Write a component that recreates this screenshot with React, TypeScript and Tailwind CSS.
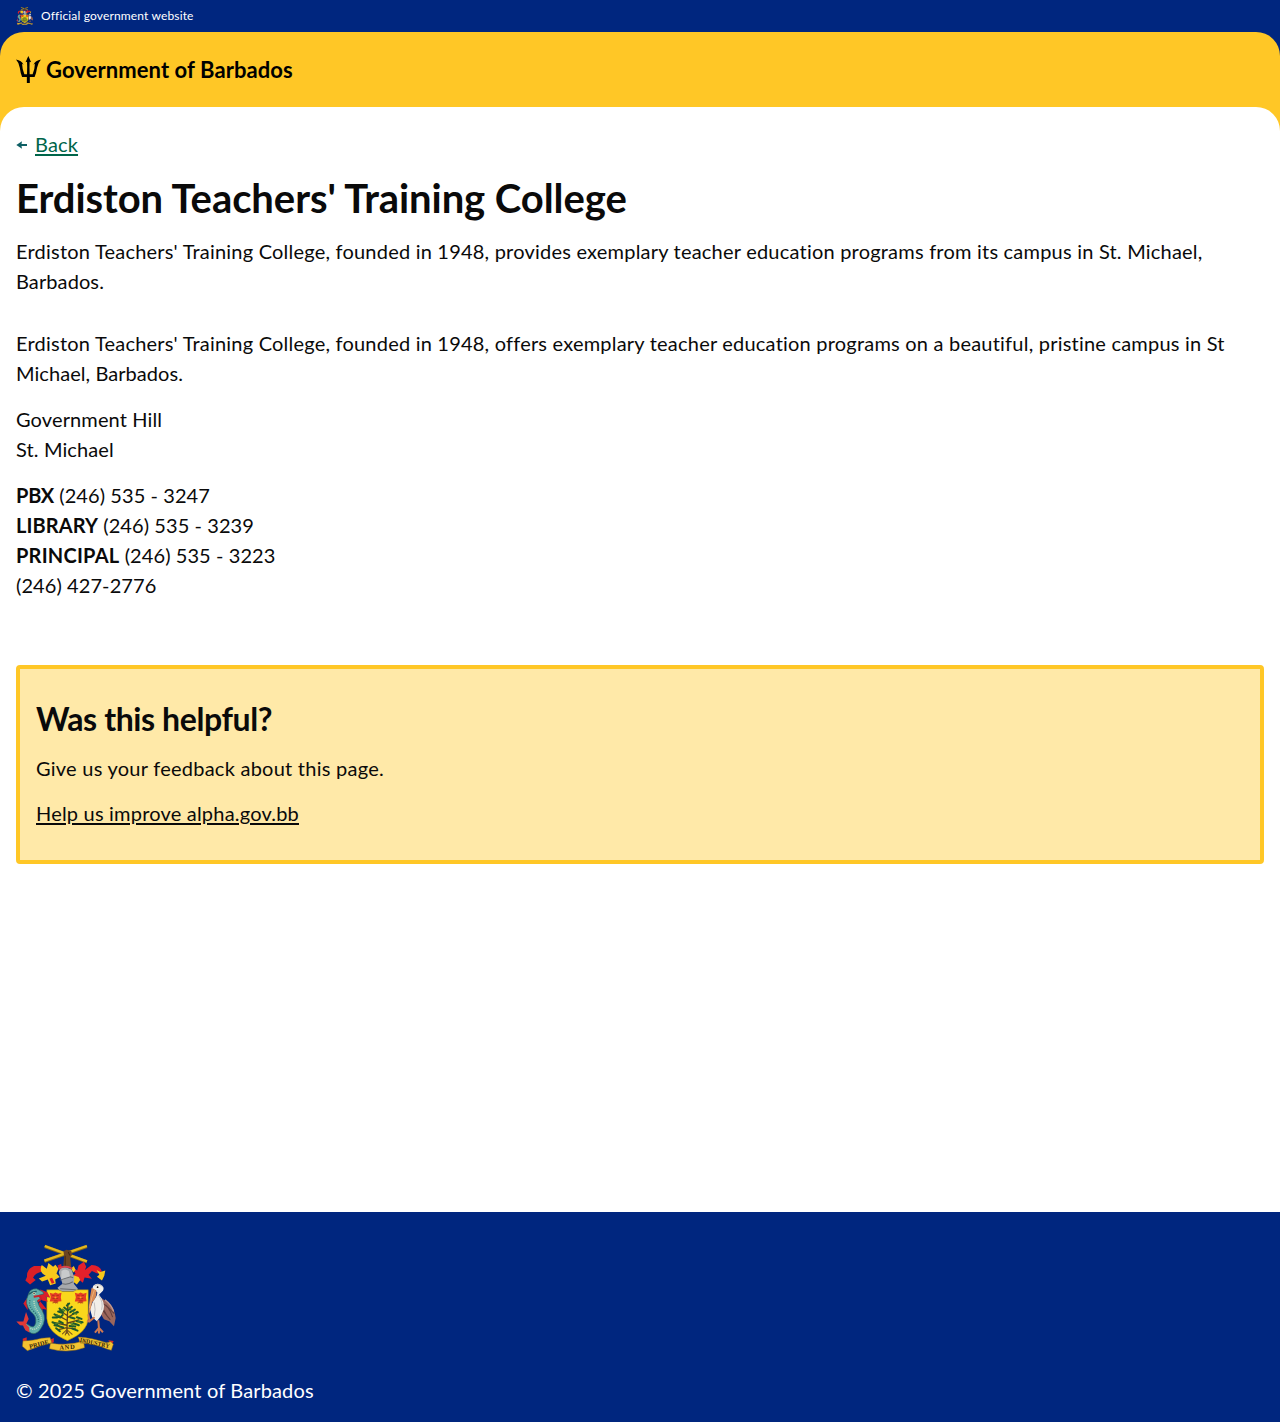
function CoatOfArms({ className }: { className: string }) {
  return (
    <svg className={className} viewBox="19 20 299 323" preserveAspectRatio="none" aria-label="Coat of arms of Barbados">
      {/* crossed sugar cane and arm */}
      <path d="M105 27 L231 73 M104 71 L231 27" stroke="#8a6a12" strokeWidth="10" />
      <path d="M105 26 L231 72 M104 70 L231 26" stroke="#e3b71f" strokeWidth="7" />
      <path d="M161 42 L170 37 L184 40 L187 52 L181 60 L184 90 H160 L163 60 Z" fill="#6b4423" />
      <path d="M166 55 V88 M175 44 L180 54" stroke="#3f2612" strokeWidth="3" />

      {/* mantling, left */}
      <path d="M102 86 L73 86 Q50 96 52 118 L47 129 L61 141 L78 128 L70 121 Q76 106 98 102 Z" fill="#dc2027" />
      <path d="M96 83 L111 94 L116 77 L130 88 L137 82 L146 94 L140 108 L150 119 L136 126 L138 138 L121 143 L114 126 L97 132 L87 123 L108 115 Q86 104 96 83 Z" fill="#f8c81b" />
      <path d="M127 121 L134 136 L126 139 L119 124 Z M143 84 L154 80 L157 96 L147 98 Z" fill="#dc2027" />
      {/* mantling, right */}
      <path d="M184 87 L202 99 L206 84 L222 73 L229 88 L225 98 L245 83 Q270 84 276 102 L262 108 L246 101 L236 112 L246 124 L224 120 L219 136 L205 125 L192 131 L187 116 L197 109 Z" fill="#e3202b" />
      <path d="M260 98 L271 104 L286 99 L283 115 L276 129 L261 118 L268 112 Z M193 114 L206 119 L211 128 L201 141 L189 132 Z M184 93 L192 86 L197 98 L190 105 Z" fill="#f8c81b" />

      {/* helmet */}
      <path d="M147 105 Q150 87 170 90 L185 96 L193 119 L192 139 L204 154 L201 162 H151 L143 151 L158 139 Z" fill="#a7a9ac" />
      <path d="M155 101 Q165 92 177 101 L181 119 L154 128 Z" fill="#c8cacc" />
      <path d="M150 128 L182 118 L190 121 M158 139 Q174 143 189 133 M151 154 L198 157" fill="none" stroke="#696c70" strokeWidth="3" />
      <path d="M147 93 Q166 82 187 94" fill="none" stroke="#d9404a" strokeWidth="5" />

      {/* shield */}
      <path d="M111 157 H146 L158 162 H190 L201 157 H235 V242 Q233 284 173 309 Q114 286 111 242 Z" fill="#f9d71c" stroke="#9b7a13" strokeWidth="1.5" />
      {[137, 212].map((x) => (
        <g key={x}>
          <path d={`M${x - 17} 166 l10 3 l7 -4 l8 4 l10 -3 l-2 13 l2 12 l-9 1 l-8 7 l-8 -7 l-10 0 l3 -13 Z`} fill="#e43b24" />
          <path d={`M${x - 10} 174 h7 m6 0 h7 M${x - 9} 183 h17 M${x - 4} 190 h10`} stroke="#b5341a" strokeWidth="3" />
          <path d={`M${x - 9} 197 q8 -6 17 0`} fill="none" stroke="#b5541a" strokeWidth="3" />
          <circle cx={x} cy="180" r="3" fill="#f7a51e" />
        </g>
      ))}
      {/* bearded fig tree */}
      <g fill="none" strokeLinecap="round">
        <path d="M174 198 L171 287 M171 248 L141 232 M172 234 L150 219 M173 240 L202 222 M172 257 L207 247 M171 263 L137 256 M171 270 L146 276 M171 271 L197 274" stroke="#5d421d" strokeWidth="4" />
        <path d="M158 289 L171 276 L187 290 M166 292 L171 280 L178 293" stroke="#765020" strokeWidth="3" />
        <path d="M171 204 L178 198 M163 210 L174 219 L186 208 M149 213 L160 224 M145 222 L157 226 M181 224 L195 216 M189 229 L204 224 M134 230 L146 238 M129 240 L142 240 M151 240 L159 232 M128 254 L143 260 M134 263 L147 265 M148 251 L159 257 M181 239 L194 243 M201 239 L215 244 M201 251 L218 254 M190 257 L207 263 M179 265 L196 267 M139 272 L150 281 M149 267 L160 270 M187 273 L203 279" stroke="#1f5b2b" strokeWidth="6" />
        <path d="M158 215 L165 220 M177 209 L183 217 M139 235 L148 234 M189 221 L199 230 M205 250 L214 258 M137 259 L149 255 M183 258 L191 263" stroke="#467c2b" strokeWidth="4" />
      </g>

      {/* dolphin */}
      <path d="M92 156 L113 164 L122 181 L108 178 L114 193 L98 189 L88 176 Z M91 191 L112 217 L98 214 L99 228 L80 214 Z M53 180 L41 198 L54 218 Z M81 247 L96 244 L88 260 Z" fill="#d9202a" />
      <path d="M56 171 Q60 153 81 154 L99 163 L102 169 L88 173 L92 184 L83 190 Q87 207 97 218 Q113 246 94 272 Q77 299 55 281 L43 269 L47 256 L61 265 Q74 273 78 255 Q81 236 63 222 Q42 198 56 171 Z" fill="#63afab" stroke="#28635f" strokeWidth="2" />
      <path d="M73 190 Q73 209 86 224 Q102 247 88 264 Q77 281 62 272" fill="none" stroke="#bad9bf" strokeWidth="5" strokeDasharray="3 3" />
      <path d="M61 188 Q55 203 72 221 Q88 237 86 252" fill="none" stroke="#276e70" strokeWidth="4" strokeDasharray="3 4" />
      <path d="M58 170 Q67 161 81 162" fill="none" stroke="#245c65" strokeWidth="4" />
      <path d="M72 178 L90 175 L94 184 L84 192" fill="none" stroke="#c9202a" strokeWidth="6" />
      <circle cx="73" cy="168" r="4" fill="#f4e5bd" />
      <circle cx="73" cy="168" r="2" fill="#17252a" />
      <path d="M49 223 L57 244 L49 260 L58 269 L59 285 L47 278 L40 264 L31 263 L20 252 L41 252 Z" fill="#df3a38" />

      {/* pelican */}
      <path d="M268 178 L293 194 Q314 210 317 241 L312 266 L298 251 L282 245 L265 217 Z" fill="#9c675c" />
      <path d="M274 196 Q298 205 308 239 M277 217 L301 247 M287 202 L313 228 M276 207 L293 238" fill="none" stroke="#643f3c" strokeWidth="3" />
      <path d="M285 187 Q304 201 311 222" fill="none" stroke="#c4988b" strokeWidth="4" />
      <path d="M250 145 Q260 135 273 142 Q285 149 279 160 L267 172 Q286 193 281 217 Q275 236 261 251 L247 239 L240 214 L251 188 Q263 174 262 164 L247 154 Z" fill="#f2efe9" />
      <path d="M245 151 L251 154 L259 158 Q262 179 247 194 L239 226 L236 232 L237 205 Q240 177 245 151 Z" fill="#d98a53" />
      <path d="M254 156 L246 180 L239 211" fill="none" stroke="#f4c391" strokeWidth="2" />
      <path d="M254 144 Q269 137 279 149 M266 173 Q281 194 275 217 M253 195 Q258 217 253 235" fill="none" stroke="#aaa7a9" strokeWidth="2" />
      <circle cx="263" cy="149" r="2.5" fill="#111" />
      <path d="M254 239 L239 251 L235 230 M239 251 L231 251 M265 248 L267 271 L255 285 M267 271 L279 284 M267 271 L267 288" fill="none" stroke="#cf7850" strokeWidth="6" />

      {/* motto scroll */}
      <path d="M39 303 L51 299 V313 L40 318 Z M120 306 L132 301 V314 L122 318 Z M207 303 L217 300 L221 312 L209 314 Z M295 308 L311 310 L305 322 Z" fill="#d7292b" />
      <path d="M40 310 Q73 309 95 302 L121 300 L126 316 Q91 323 53 339 L38 326 Z M122 316 Q170 326 221 310 L224 330 Q174 349 119 333 Z M205 298 Q246 300 289 315 L303 312 L310 320 L304 338 L291 334 Q259 319 211 316 Z" fill="#f3c331" stroke="#8e6915" strokeWidth="1.5" />
      <g fill="#33240b" fontFamily="Liberation Serif, serif" fontSize="19" fontWeight="700">
        <text x="60" y="333" textLength="60" transform="rotate(-14 60 333)">PRIDE</text>
        <text x="149" y="336" textLength="46" transform="rotate(-3 149 336)">AND</text>
        <text x="209" y="313" textLength="90" lengthAdjust="spacingAndGlyphs" transform="rotate(12 209 313)">INDUSTRY</text>
      </g>
    </svg>
  );
}

function Trident() {
  return (
    <svg className="h-[27px] w-[25px]" viewBox="48 168 76 81" preserveAspectRatio="none" aria-hidden="true">
      <path
        d="M85.500 168 L94 187 L89.500 185.500 Q88.500 200 89.500 223 H98.500 Q105 209 105.500 191 L101 194 Q107 181 124 178.500 Q115 188 112 203 Q110 218 104.500 231 H90 V249 H81 V231 H66.500 Q61.500 218 59.500 203 Q57 188 48 178.500 Q65 181 71 194 L66.500 191 Q67 209 73.500 223 H81.500 Q82.500 200 81.500 185.500 L77 187 Z"
        fill="#000"
      />
    </svg>
  );
}

export default function App() {
  return (
    <div className="flex min-h-[1422px] flex-col bg-white font-['Lato',sans-serif] text-[20px] leading-[30px] tracking-[0.213px] text-[#0a0a0a]">
      <div className="bg-[#00267f]">
        <div className="flex h-8 items-center gap-2 px-4 text-white">
          <CoatOfArms className="h-[18px] w-[17px]" />
          <span className="text-[12px] leading-4 tracking-[0.15px]">Official government website</span>
        </div>
        <header className="rounded-t-3xl bg-[#ffc726]">
          <div className="flex h-[75px] items-center gap-[5px] px-4 text-black">
            <Trident />
            <span className="text-[22px] font-bold tracking-[0.08px]">Government of Barbados</span>
          </div>
        </header>
      </div>

      <div className="flex grow bg-[#ffc726]">
        <main className="w-full rounded-t-3xl bg-white px-4 pt-[22px]">
          <a className="flex items-center gap-2 text-[#00654a]" href="#back">
            <svg className="mt-0.5 h-2 w-[11px]" viewBox="0 0 11 8" aria-hidden="true">
              <path d="M0.300 4 L6 0.300 L5.500 3 H11 V5 H5.500 L6 7.700 Z" fill="#0e5f64" />
            </svg>
            <span className="tracking-[0.15px] underline decoration-2 underline-offset-2">Back</span>
          </a>
          <h1 className="mt-[13px] text-[40px] leading-[52px] font-bold tracking-[-0.07px]">
            Erdiston Teachers' Training College
          </h1>
          <p className="mt-3">
            Erdiston Teachers' Training College, founded in 1948, provides exemplary teacher education programs from its campus in St. Michael,
            <br />
            <span className="tracking-[0.1px]">Barbados.</span>
          </p>
          <div className="mt-8 space-y-4">
            <p>
              Erdiston Teachers' Training College, founded in 1948, offers exemplary teacher education programs on a beautiful, pristine campus in St
              <br />
              <span className="tracking-[0.063px]">Michael, Barbados.</span>
            </p>
            <p className="tracking-[0.12px]">
              Government Hill
              <br />
              St. Michael
            </p>
            <p className="tracking-[0.08px]">
              <b className="tracking-[-0.25px]">PBX</b> (246) 535 - 3247
              <br />
              <b className="tracking-[0.09px]">LIBRARY</b> (246) 535 - 3239
              <br />
              <b className="tracking-[0.23px]">PRINCIPAL</b> (246) 535 - 3223
              <br />
              (246) 427-2776
            </p>
          </div>
          <section className="mt-[65px] h-[199px] rounded-sm border-4 border-[#ffc726] bg-[#ffe9a8] px-4 pt-[30px]">
            <h2 className="text-[32px] leading-10 font-bold tracking-[-0.4px]">Was this helpful?</h2>
            <p className="mt-[14px] tracking-[0.25px]">Give us your feedback about this page.</p>
            <p className="mt-[15px]">
              <a className="tracking-[0.2px] underline decoration-2 underline-offset-2" href="#feedback">
                Help us improve alpha.gov.bb
              </a>
            </p>
          </section>
        </main>
      </div>

      <footer className="flex h-[210px] flex-col bg-[#00267f] px-4 pt-8 text-white">
        <CoatOfArms className="h-[108px] w-[100px]" />
        <p className="mt-[23px] tracking-[0.15px]">© 2025 Government of Barbados</p>
      </footer>
    </div>
  );
}
